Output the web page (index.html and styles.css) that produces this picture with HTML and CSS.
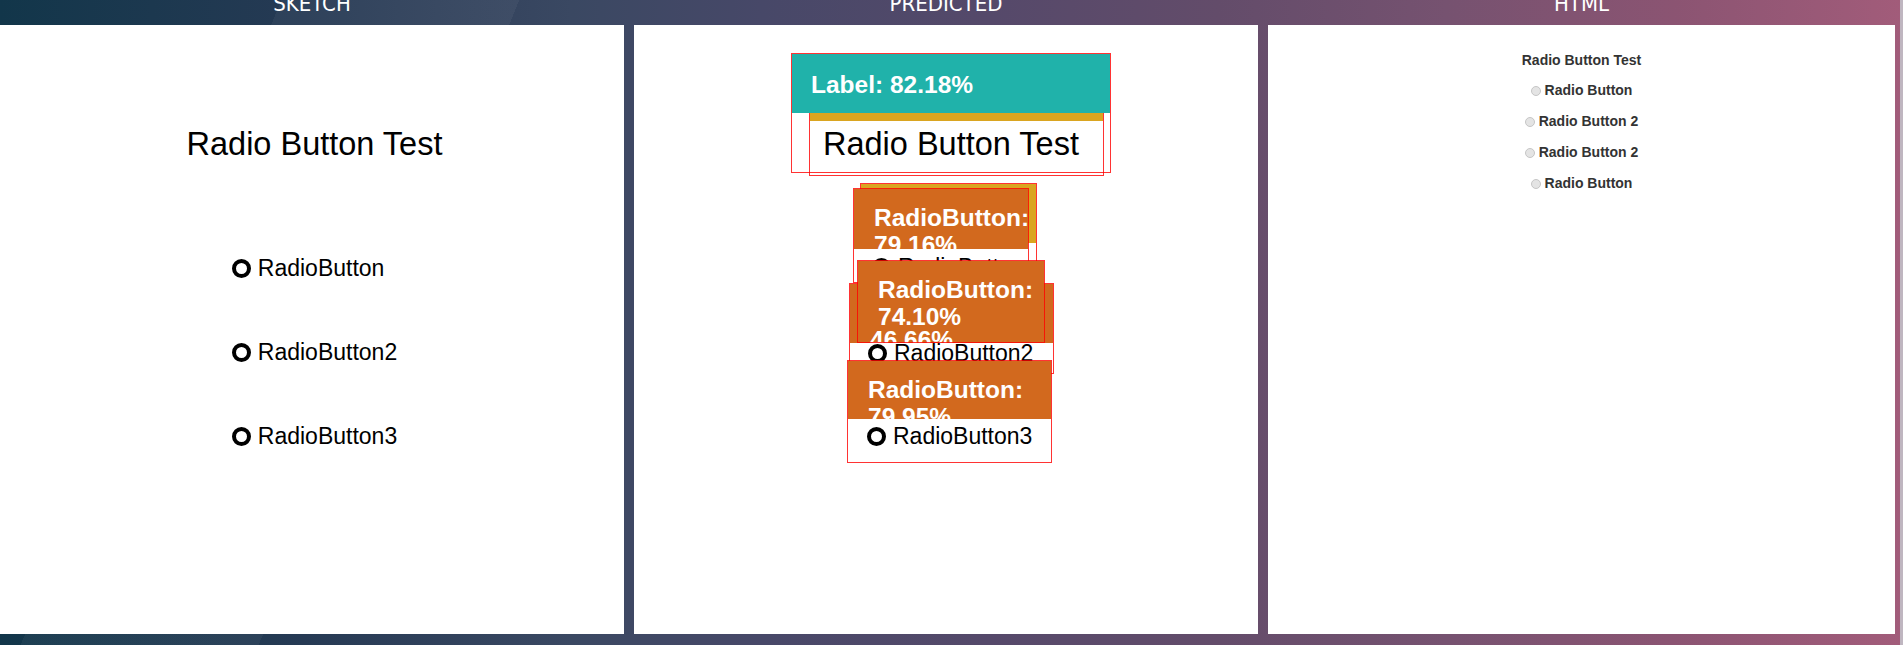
FILE: index.html
```html
<!DOCTYPE html>
<html>
<head>
<meta charset="utf-8">
<title>Radio Button Test</title>
<link rel="stylesheet" href="styles.css">
</head>
<body>
<div class="page">
  <div class="tabs">
    <div class="tab">SKETCH</div>
    <div class="tab">PREDICTED</div>
    <div class="tab">HTML</div>
  </div>
  <div class="panels">
    <section class="panel sketch">
      <h1 class="sk-title">Radio Button Test</h1>
      <div class="sk-list">
        <div class="radio"><span class="ring"></span>RadioButton</div>
        <div class="radio"><span class="ring"></span>RadioButton2</div>
        <div class="radio"><span class="ring"></span>RadioButton3</div>
      </div>
    </section>

    <section class="panel predicted">
      <div class="det" style="left:175px;top:36px;width:295px;height:115px">
        <div class="det-label gold"></div>
        <div class="det-body white body-title"><span class="p-title">Radio Button Test</span></div>
      </div>
      <div class="det" style="left:157px;top:28px;width:320px;height:120px">
        <div class="det-label teal label-teal">Label: 82.18%</div>
        <div class="det-body"></div>
      </div>
      <div class="det" style="left:226px;top:158px;width:177px;height:110px">
        <div class="det-label gold"></div>
        <div class="det-body white"></div>
      </div>
      <div class="det" style="left:219px;top:163px;width:176px;height:95px">
        <div class="det-label orange label-60">RadioButton: 79.16%</div>
        <div class="det-body white body-radio body-a"><div class="radio"><span class="ring"></span>RadioButton</div></div>
      </div>
      <div class="det" style="left:215px;top:258px;width:205px;height:91px">
        <div class="det-label orange">RadioButton: 46.66%</div>
        <div class="det-body white body-radio body-c"><div class="radio tight"><span class="ring"></span>RadioButton2</div></div>
      </div>
      <div class="det" style="left:223px;top:235px;width:188px;height:83px">
        <div class="det-label orange label-60">RadioButton: 74.10%</div>
        <div class="det-body"></div>
      </div>
      <div class="det" style="left:213px;top:335px;width:205px;height:103px">
        <div class="det-label orange label-58">RadioButton: 79.95%</div>
        <div class="det-body white body-radio body-d"><div class="radio"><span class="ring"></span>RadioButton3</div></div>
      </div>
    </section>

    <section class="panel html">
      <h2 class="h-title">Radio Button Test</h2>
      <div class="h-list">
        <label class="h-radio"><span class="h-dot"></span>Radio Button</label>
        <label class="h-radio"><span class="h-dot"></span>Radio Button 2</label>
        <label class="h-radio"><span class="h-dot"></span>Radio Button 2</label>
        <label class="h-radio"><span class="h-dot"></span>Radio Button</label>
      </div>
    </section>
  </div>
</div>
</body>
</html>
```

FILE: styles.css
```css
html, body {
  margin: 0;
  padding: 0;
}

body {
  width: 1903px;
  height: 645px;
  overflow: hidden;
  font-family: "Liberation Sans", Arial, sans-serif;
  background:
    linear-gradient(112deg, transparent 0 13%, rgba(255,255,255,0.045) 13% 24%, transparent 24% 100%),
    linear-gradient(90deg, #12364a 0%, #263a54 16%, #3a4862 30%, #474868 40%, #55496a 52%, #634c6a 64%, #765270 76%, #8b5472 88%, #a25c7a 100%);
}

.page {
  display: flex;
  flex-direction: column;
  height: 645px;
  padding-right: 5px;
  border-right: 3px solid #bfb6c0;
  box-sizing: border-box;
}

.tabs {
  display: grid;
  grid-template-columns: 624px 624px 627px;
  column-gap: 10px;
  height: 25px;
  flex: none;
}

.tab {
  color: #ffffff;
  text-align: center;
  font-family: "Liberation Sans Narrow", "DejaVu Sans Condensed", sans-serif;
  font-stretch: condensed;
  font-size: 22px;
  line-height: 7px;
}

.panels {
  display: grid;
  grid-template-columns: 624px 624px 627px;
  column-gap: 10px;
  height: 609px;
  flex: none;
}

.panel {
  background: #ffffff;
  position: relative;
  overflow: hidden;
}

/* ---------- sketch ---------- */
.sketch {
  display: flex;
  flex-direction: column;
  align-items: center;
  padding-top: 101px;
  padding-left: 5px;
  box-sizing: border-box;
}

.sk-title {
  margin: 0;
  font-weight: normal;
  font-size: 32.5px;
  line-height: 36px;
  color: #000;
  white-space: nowrap;
}

.sk-list {
  margin-top: 93px;
  display: flex;
  flex-direction: column;
  align-items: flex-start;
  gap: 57px;
}

.radio {
  display: flex;
  align-items: center;
  gap: 7px;
  font-size: 23px;
  line-height: 27px;
  color: #000;
  white-space: nowrap;
}

.radio.tight {
  line-height: 20px;
}

.ring {
  flex: none;
  width: 19px;
  height: 19px;
  border: 4.5px solid #000;
  border-radius: 50%;
  box-sizing: border-box;
  background: #fff;
}

/* ---------- predicted ---------- */
.det {
  position: absolute;
  display: flex;
  flex-direction: column;
  border: 1px solid rgba(255, 0, 0, 0.8);
  box-sizing: border-box;
}

.det-label {
  flex: none;
  height: 59px;
  padding: 15px 0 0 20px;
  box-sizing: border-box;
  color: #ffffff;
  font-weight: bold;
  font-size: 24.5px;
  line-height: 27px;
}

.label-60 { height: 60px; }
.label-58 { height: 58px; }
.label-teal { padding-top: 17px; padding-left: 19px; }

.teal { background: #20b2aa; }
.gold { background: #daa520; }
.orange { background: #d2691e; }

.det-body {
  position: relative;
  flex: 1;
  overflow: hidden;
}

.det-body.white {
  background: #ffffff;
}

.body-title {
  padding: 5px 0 0 13px;
}

.p-title {
  display: block;
  font-size: 32.5px;
  line-height: 36px;
  color: #000;
  white-space: nowrap;
}

.body-radio { padding-left: 18px; }
.body-a { padding-top: 5px; }
.body-c { padding-top: 0; }
.body-d { padding-top: 4px; padding-left: 19px; }

/* ---------- html ---------- */
.html {
  display: flex;
  flex-direction: column;
  align-items: center;
  padding-top: 27px;
  box-sizing: border-box;
  color: #333333;
  font-weight: bold;
  font-size: 14px;
  line-height: 17px;
}

.h-title {
  margin: 0 0 13px;
  font-size: 14px;
  line-height: 17px;
  font-weight: bold;
}

.h-list {
  display: flex;
  flex-direction: column;
  align-items: center;
  gap: 14px;
}

.h-radio {
  display: flex;
  align-items: center;
  gap: 4px;
}

.h-dot {
  flex: none;
  width: 10px;
  height: 10px;
  border-radius: 50%;
  background: #e4e4e4;
  border: 1px solid #c6c6c6;
  box-sizing: border-box;
}
```
